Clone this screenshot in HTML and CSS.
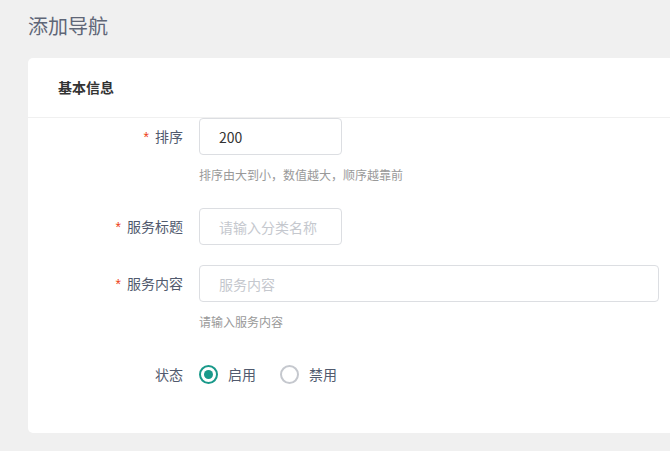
FILE: index.html
```html
<!DOCTYPE html>
<html lang="zh-CN">
<head>
<meta charset="utf-8">
<title>添加导航</title>
<link rel="stylesheet" href="styles.css">
</head>
<body>
<div class="page">
  <h1 class="page-title">添加导航</h1>
  <div class="card">
    <div class="card-head">基本信息</div>
    <form class="form">
      <div class="item item-help">
        <label class="label"><span class="req">*</span>排序</label>
        <div class="control">
          <input class="input input-sm" type="text" value="200">
          <div class="help">排序由大到小，数值越大，顺序越靠前</div>
        </div>
      </div>
      <div class="item">
        <label class="label"><span class="req">*</span>服务标题</label>
        <div class="control">
          <input class="input input-sm" type="text" placeholder="请输入分类名称">
        </div>
      </div>
      <div class="item item-help">
        <label class="label"><span class="req">*</span>服务内容</label>
        <div class="control">
          <input class="input input-lg" type="text" placeholder="服务内容">
          <div class="help">请输入服务内容</div>
        </div>
      </div>
      <div class="item item-radio">
        <label class="label">状态</label>
        <div class="control radios">
          <span class="radio"><span class="dot checked"></span>启用</span>
          <span class="radio"><span class="dot"></span>禁用</span>
        </div>
      </div>
    </form>
  </div>
</div>
</body>
</html>
```

FILE: styles.css
```css
html, body {
  margin: 0;
  padding: 0;
  background: #f0f0f0;
  overflow: hidden;
}
body {
  font-family: "Noto Sans CJK SC", "Noto Sans", sans-serif;
  color: #515a6e;
  font-size: 14px;
}
.page {
  padding-left: 28px;
}
.page-title {
  margin: 12px 0 0;
  font-size: 20px;
  line-height: 28px;
  font-weight: normal;
  color: #5f6677;
}
.card {
  margin-top: 18px;
  background: #fff;
  border-radius: 5px 0 0 5px;
  padding-bottom: 43px;
}
.card-head {
  height: 59px;
  line-height: 59px;
  padding-left: 30px;
  font-size: 14px;
  font-weight: bold;
  color: #333;
  border-bottom: 1px solid #f0f0f0;
}
.form {
  display: flex;
  flex-direction: column;
}
.item {
  display: grid;
  grid-template-columns: 171px 1fr;
  margin-bottom: 19px;
}
.item-help {
  margin-bottom: 23px;
}
.item-radio {
  margin-top: 3px;
  margin-bottom: 0;
}
.label {
  box-sizing: border-box;
  padding-right: 16px;
  text-align: right;
  line-height: 37px;
  color: #515a6e;
}
.req {
  color: #ed4014;
  margin-right: 6px;
  font-family: "Liberation Sans", sans-serif;
}
.control {
  display: flex;
  flex-direction: column;
  align-items: flex-start;
}
.input {
  box-sizing: border-box;
  height: 37px;
  border: 1px solid #dcdee2;
  border-radius: 4px;
  padding: 0 10px 0 19px;
  font-family: inherit;
  font-size: 14px;
  color: #333;
  outline: none;
  background: #fff;
}
.input::placeholder {
  color: #c5c8ce;
}
.input-sm {
  width: 143px;
}
.input-lg {
  width: 460px;
}
.help {
  margin-top: 10px;
  font-size: 12px;
  line-height: 20px;
  color: #999;
}
.item-radio .label {
  line-height: 32px;
}
.radios {
  flex-direction: row;
  align-items: center;
  height: 32px;
  gap: 24px;
}
.radio {
  display: inline-flex;
  align-items: center;
  gap: 10px;
  color: #515a6e;
}
.dot {
  box-sizing: border-box;
  width: 19px;
  height: 19px;
  border-radius: 50%;
  border: 2px solid #c5c8ce;
  display: inline-flex;
  align-items: center;
  justify-content: center;
}
.dot.checked {
  border-color: #19998a;
}
.dot.checked::after {
  content: "";
  width: 9px;
  height: 9px;
  border-radius: 50%;
  background: #19998a;
}
```
